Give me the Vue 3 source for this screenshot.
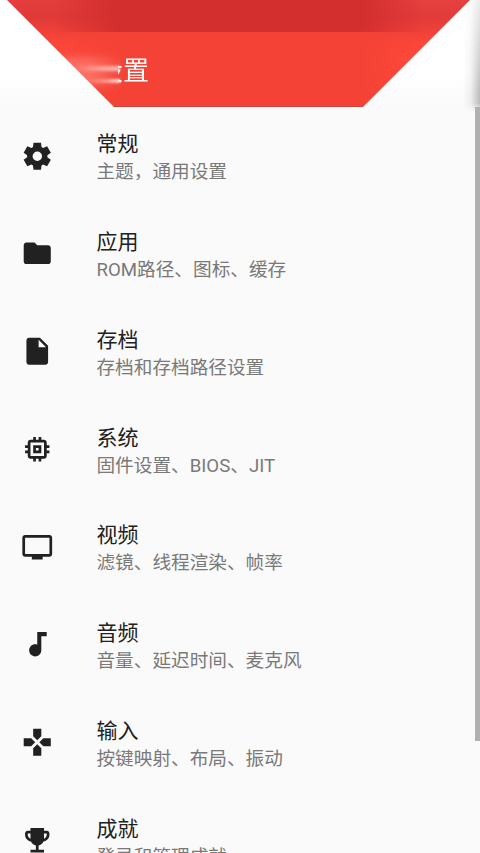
<script setup>
const items = [
  { title: '常规', summary: '主题，通用设置', icon: 'M9.25 22l-.4-3.2c-.22-.08-.42-.18-.61-.3s-.38-.25-.56-.38L4.7 19.38l-2.75-4.75 2.58-1.95a2.4 2.4 0 0 1-.03-.34v-.68c0-.11.01-.22.03-.34L1.95 9.38 4.7 4.63l2.98 1.25c.18-.13.37-.26.57-.38s.4-.22.6-.3L9.25 2h5.5l.4 3.2c.22.08.42.18.61.3s.38.25.56.38l2.98-1.25 2.75 4.75-2.58 1.95c.02.12.03.23.03.34v.68c0 .11-.02.22-.05.34l2.58 1.95-2.75 4.75-2.96-1.27c-.18.13-.37.26-.57.38s-.4.22-.6.3l-.4 3.2h-5.5zM12.05 15.5a3.5 3.5 0 1 0 0-7 3.5 3.5 0 1 0 0 7z' },
  { title: '应用', summary: 'ROM路径、图标、缓存', icon: 'M10 4H4c-1.1 0-1.99.9-1.99 2L2 18c0 1.1.9 2 2 2h16c1.1 0 2-.9 2-2V8c0-1.1-.9-2-2-2h-8l-2-2z' },
  { title: '存档', summary: '存档和存档路径设置', icon: 'M6 2c-1.1 0-1.99.9-1.99 2L4 20c0 1.1.89 2 1.99 2H18c1.1 0 2-.9 2-2V8l-6-6H6zm7 7V3.5L18.5 9H13z' },
  { title: '系统', summary: '固件设置、BIOS、JIT', icon: 'M15 9H9v6h6V9zm-2 4h-2v-2h2v2zm8-2V9h-2V7c0-1.1-.9-2-2-2h-2V3h-2v2h-2V3H9v2H7c-1.1 0-2 .9-2 2v2H3v2h2v2H3v2h2v2c0 1.1.9 2 2 2h2v2h2v-2h2v2h2v-2h2c1.1 0 2-.9 2-2v-2h2v-2h-2v-2h2zm-4 6H7V7h10v10z' },
  { title: '视频', summary: '滤镜、线程渲染、帧率', icon: 'M21 3H3c-1.1 0-2 .9-2 2v12c0 1.1.9 2 2 2h5v2h8v-2h5c1.1 0 1.99-.9 1.99-2L23 5c0-1.1-.9-2-2-2zm0 14H3V5h18v12z' },
  { title: '音频', summary: '音量、延迟时间、麦克风', icon: 'M12 3v9.28c-.47-.17-.97-.28-1.5-.28C8.01 12 6 14.01 6 16.5S8.01 21 10.5 21c2.31 0 4.2-1.75 4.45-4H15V6h4V3h-7z' },
  { title: '输入', summary: '按键映射、布局、振动', icon: 'M15 7.5V2H9v5.5l3 3 3-3zM7.5 9H2v6h5.5l3-3-3-3zM9 16.5V22h6v-5.5l-3-3-3 3zM16.5 9l-3 3 3 3H22V9h-5.5z' },
  { title: '成就', summary: '登录和管理成就', icon: 'M19 5h-2V3H7v2H5c-1.1 0-2 .9-2 2v1c0 2.55 1.92 4.63 4.39 4.94.63 1.5 1.98 2.63 3.61 2.96V19H7v2h10v-2h-4v-3.1c1.63-.33 2.98-1.46 3.61-2.96C19.08 12.63 21 10.55 21 8V7c0-1.1-.9-2-2-2zM5 8V7h2v3.82C5.84 10.4 5 9.3 5 8zm14 0c0 1.3-.84 2.4-2 2.82V7h2v1z' }
]
</script>

<template>
  <div class="screen">
    <header class="top">
      <div class="red">
        <div class="status"></div>
        <div class="toolbar">
          <h1>设置</h1>
        </div>
        <div class="sheen left"></div>
        <div class="sheen right"></div>
        <i class="streak wide"></i>
        <i class="streak upper"></i>
        <i class="streak lower"></i>
      </div>
      <div class="edge"></div>
    </header>
    <main class="list">
      <div v-for="item in items" :key="item.title" class="row">
        <svg class="icon" viewBox="0 0 24 24"><path :d="item.icon" fill-rule="evenodd" /></svg>
        <div class="text">
          <div class="title">{{ item.title }}</div>
          <div class="summary">{{ item.summary }}</div>
        </div>
      </div>
    </main>
    <div class="scrollbar"></div>
  </div>
</template>

<style>
body {
  margin: 0;
  background: #fafafa;
}
</style>

<style scoped>
.screen {
  position: relative;
  width: 480px;
  height: 853px;
  overflow: hidden;
  background: #fafafa;
  font-family: Roboto, "Noto Sans CJK SC", sans-serif;
}
.top {
  position: relative;
  height: 107px;
  background: linear-gradient(#fff 70%, #fafafa);
}
.red {
  position: relative;
  height: 107px;
  background: #f44336;
  clip-path: polygon(7px 0, 470px 0, 363px 107px, 114px 107px);
  filter: blur(0.5px);
}
.status {
  height: 32px;
  background: #d32f2f;
}
.toolbar {
  display: flex;
  align-items: center;
  height: 75px;
  padding: 3px 0 0 97px;
  border-bottom: 1px solid #c9463c;
  box-sizing: border-box;
}
h1 {
  margin: 0;
  font-size: 26px;
  line-height: 36px;
  font-weight: 400;
  color: #fff;
  clip-path: inset(0 0 0 21px);
}
.sheen {
  position: absolute;
  top: 0;
  width: 118px;
  height: 106px;
}
.left {
  left: 0;
  background: linear-gradient(#e43d3d 0, #e03a37 18px, #fa463a 42px, #ff4a3d 60px, #f84539 106px);
  mask-image: linear-gradient(90deg, #000 45%, transparent);
}
.right {
  left: 360px;
  background: linear-gradient(#e64040 0, #e23b39 18px, #fa463a 42px, #ff4a3d 60px, #f84539 106px);
  mask-image: linear-gradient(270deg, #000 45%, transparent);
}
.streak {
  position: absolute;
}
.wide {
  left: 62px;
  top: 58px;
  width: 56px;
  height: 28px;
  background: linear-gradient(90deg, rgba(255, 125, 115, 0.75) 50%, rgba(255, 125, 115, 0.15));
  filter: blur(4px);
}
.upper {
  left: 76px;
  top: 66px;
  width: 44px;
  height: 5px;
  background: linear-gradient(90deg, transparent, rgba(255, 190, 183, 0.75) 60%, rgba(255, 225, 222, 0.75));
  filter: blur(1.5px);
}
.lower {
  left: 86px;
  top: 79px;
  width: 34px;
  height: 4px;
  background: linear-gradient(90deg, transparent, rgba(255, 190, 183, 0.6) 60%, rgba(255, 235, 232, 0.9));
  filter: blur(1.2px);
}
.edge {
  position: absolute;
  top: 0;
  right: 0;
  width: 17px;
  height: 112px;
  background: linear-gradient(90deg, transparent, rgba(0, 0, 0, 0.05) 45%, rgba(0, 0, 0, 0.26));
  mask-image: linear-gradient(rgba(0, 0, 0, 0.3), rgba(0, 0, 0, 0.65) 45%, #000 85%, #000 92%, transparent);
}
.row {
  display: flex;
  align-items: center;
  height: 97.75px;
  padding-left: 21.3px;
}
.icon {
  flex: none;
  width: 32.5px;
  height: 32.5px;
  margin-right: 42.7px;
  fill: #212121;
}
.text {
  padding-top: 5px;
  white-space: nowrap;
}
.title {
  font-size: 21px;
  line-height: 28px;
  color: #212121;
}
.summary {
  font-size: 18.65px;
  line-height: 28px;
  color: #797979;
}
.scrollbar {
  position: absolute;
  right: 0;
  top: 107px;
  width: 5px;
  height: 634px;
  background: #b0b0b0;
}
</style>
